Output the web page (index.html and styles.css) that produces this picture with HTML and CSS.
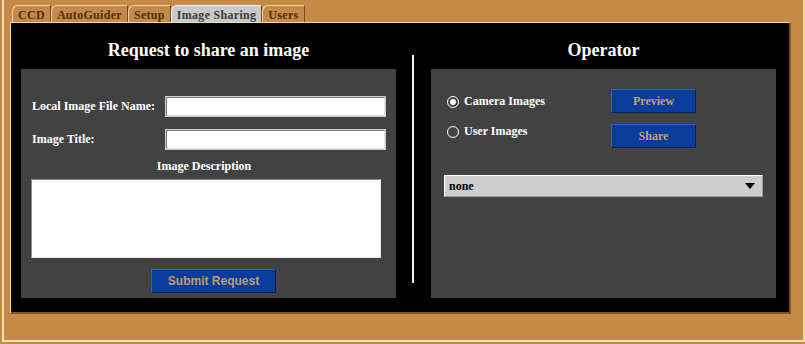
FILE: index.html
```html
<!DOCTYPE html>
<html lang="en">
<head>
  <meta charset="UTF-8">
  <title>Image Sharing</title>
  <link rel="stylesheet" href="styles.css">
</head>
<body>
  <div class="app">
    <div class="tabs">
      <span class="tab">CCD</span>
      <span class="tab">AutoGuider</span>
      <span class="tab">Setup</span>
      <span class="tab active">Image Sharing</span>
      <span class="tab">Users</span>
    </div>

    <div class="stage">
      <div class="col col-left">
        <h2>Request to share an image</h2>
        <div class="panel request">
          <div class="field">
            <label for="file">Local Image File Name:</label>
            <input type="text" id="file">
          </div>
          <div class="field">
            <label for="title">Image Title:</label>
            <input type="text" id="title">
          </div>
          <div class="desc-label">Image Description</div>
          <textarea class="desc"></textarea>
          <button class="btn submit">Submit Request</button>
        </div>
      </div>

      <div class="divider"></div>

      <div class="col col-right">
        <h2>Operator</h2>
        <div class="panel operator">
          <div class="op-top">
            <div class="radios">
              <label class="radio-row"><span class="radio checked"></span>Camera Images</label>
              <label class="radio-row"><span class="radio"></span>User Images</label>
            </div>
            <div class="buttons">
              <button class="btn small">Preview</button>
              <button class="btn small">Share</button>
            </div>
          </div>
          <div class="select">
            <span>none</span>
            <span class="arrow"></span>
          </div>
        </div>
      </div>
    </div>
  </div>
</body>
</html>
```

FILE: styles.css
```css
* {
  box-sizing: border-box;
}

body {
  margin: 0;
  background: #c58a48;
  font-family: 'Liberation Serif', 'Times New Roman', serif;
  font-weight: bold;
}

.app {
  width: 803px;
  height: 342px;
  margin-left: 2px;
  border-left: 2px solid #f2e4b6;
  border-right: 2px solid #eed9a6;
  border-bottom: 2px solid #f2e4b6;
  padding: 5px 0 0 6px;
}

/* tabs */
.tabs {
  display: flex;
  height: 17px;
  padding-left: 2px;
}

.tab {
  font-size: 12px;
  color: #4a2f10;
  padding: 2px 5px 0 5px;
  border-top: 1px solid #f0d9a6;
  border-left: 1px solid #f0d9a6;
  border-right: 1px solid #6e4a20;
  border-radius: 6px 0 0 0;
  line-height: 14px;
  letter-spacing: 0.3px;
}

.tab.active {
  background: #c9c9c9;
  color: #3a3a3a;
  border-top-color: #ffffff;
  border-left-color: #ffffff;
}

/* main black area */
.stage {
  display: flex;
  width: 781px;
  height: 292px;
  background: #000;
  border-top: 1px solid #f0dcaa;
  border-left: 1px solid #f0dcaa;
  border-right: 2px solid #7a5526;
  border-bottom: 2px solid #7a5526;
  padding: 0 12px 14px 10px;
}

.col {
  display: flex;
  flex-direction: column;
}

.col-left {
  width: 375px;
}

.col-right {
  width: 345px;
}

h2 {
  margin: 0;
  height: 46px;
  line-height: 54px;
  text-align: center;
  color: #fff;
  font-size: 18px;
}

.panel {
  flex: 1;
  background: #424242;
  color: #fff;
  font-size: 12px;
}

.divider {
  width: 2px;
  height: 228px;
  margin: 32px 17px 0 16px;
  background: #f4f4f4;
}

/* request panel */
.request {
  display: flex;
  flex-direction: column;
  padding: 28px 11px 0 10px;
}

.field {
  display: flex;
  align-items: center;
  justify-content: space-between;
  height: 18px;
  margin-bottom: 15px;
  padding-left: 1px;
}

.field input {
  width: 219px;
  height: 19px;
  border: 1px solid #7a7a7a;
  border-right-color: #e0e0e0;
  border-bottom-color: #e0e0e0;
  outline: 1px solid #cfcfcf;
  background: #fff;
}

.desc-label {
  text-align: center;
  margin-top: -4px;
  margin-right: 8px;
  height: 14px;
}

.desc {
  width: 350px;
  height: 79px;
  margin-top: 6px;
  border: 1px solid #8a8a8a;
  border-right-color: #e6e6e6;
  border-bottom-color: #e6e6e6;
  background: #fff;
  resize: none;
}

.btn {
  background: #0a3c9c;
  border: 1px solid #2a62cc;
  border-right-color: #051f5a;
  border-bottom-color: #051f5a;
  color: #c8a06e;
  font-family: 'Liberation Serif', 'Times New Roman', serif;
  font-weight: bold;
  font-size: 12px;
  padding: 0;
}

.submit {
  align-self: flex-start;
  width: 125px;
  height: 24px;
  margin: 11px 0 0 120px;
  font-family: 'Liberation Sans', Arial, sans-serif;
  color: #c09a6a;
}

/* operator panel */
.operator {
  padding: 20px 13px 0 13px;
}

.op-top {
  display: flex;
}

.radios {
  display: flex;
  flex-direction: column;
  gap: 14px;
  width: 167px;
  padding: 4px 0 0 3px;
}

.radio-row {
  display: flex;
  align-items: center;
  height: 16px;
}

.radio {
  width: 12px;
  height: 12px;
  border: 1px solid #fff;
  border-radius: 50%;
  margin: 2px 5px 0 0;
  position: relative;
}

.radio.checked::after {
  content: "";
  position: absolute;
  left: 2px;
  top: 2px;
  width: 6px;
  height: 6px;
  border-radius: 50%;
  background: #fff;
}

.buttons {
  display: flex;
  flex-direction: column;
  gap: 11px;
}

.small {
  width: 85px;
  height: 24px;
}

.select {
  display: flex;
  align-items: center;
  justify-content: space-between;
  width: 319px;
  height: 22px;
  margin-top: 27px;
  background: #cecece;
  border: 1px solid #ffffff;
  border-right-color: #9a9a9a;
  border-bottom-color: #9a9a9a;
  color: #000;
  padding: 0 7px 0 4px;
}

.arrow {
  width: 0;
  height: 0;
  border-left: 5px solid transparent;
  border-right: 5px solid transparent;
  border-top: 6px solid #000;
}
```
